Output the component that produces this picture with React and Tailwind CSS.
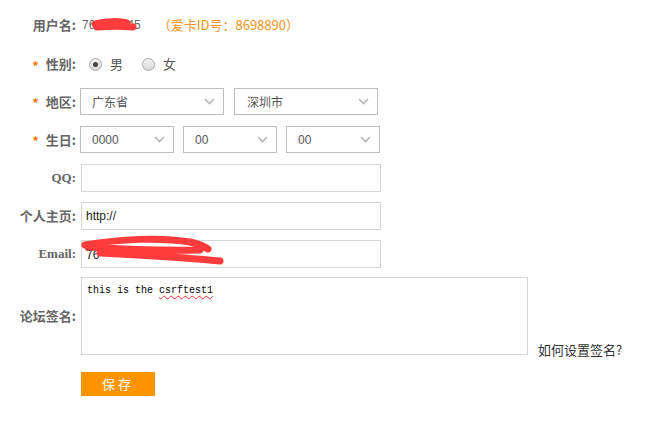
import React from 'react';

const cjk = { fontFamily: '"Noto Sans CJK SC", "Liberation Sans", sans-serif' };
const serif = { fontFamily: '"Liberation Serif", "Noto Sans CJK SC", serif' };

const Chevron = () => (
  <svg width="11" height="7" viewBox="0 0 11 7" className="shrink-0">
    <path d="M1 1l4.5 4.5L10 1" fill="none" stroke="#b5b5b5" strokeWidth="1.6" />
  </svg>
);

const Select = ({ value, w, pl = 'pl-[11px]' }) => (
  <div className={`flex items-center justify-between h-[27px] border border-[#bdbdbd] bg-white pr-[8px] ${pl} ${w}`}>
    <span className="text-[12px] text-[#555]">{value}</span>
    <Chevron />
  </div>
);

const Label = ({ star, children, font = cjk }) => (
  <div className="w-[77px] shrink-0 flex justify-end items-center pr-[1px]">
    {star && <span className="text-[#f27b00] font-bold text-[13px] mr-[7px] mt-[3px]">*</span>}
    <span className="text-[13px] font-bold text-[#666]" style={font}>{children}</span>
  </div>
);

const Radio = ({ checked }) => (
  <span className="w-[13px] h-[13px] rounded-full border border-[#a9a9a9] bg-gradient-to-b from-[#f2f2f2] to-[#d9d9d9] flex items-center justify-center">
    {checked && <span className="w-[5px] h-[5px] rounded-full bg-[#444]" />}
  </span>
);

const Scribble = ({ d, w, h, className }) => (
  <svg width={w} height={h} viewBox={`0 0 ${w} ${h}`} className={`absolute pointer-events-none ${className}`}>
    <path d={d} fill="none" stroke="#ff3b3b" strokeWidth="7" strokeLinecap="round" strokeLinejoin="round" />
  </svg>
);

export default function App() {
  return (
    <div className="w-[654px] h-[424px] bg-white relative text-[#555]" style={cjk}>
      <div className="pt-[15px]">
        {/* username */}
        <div className="flex items-center h-[20px]">
          <Label>用户名:</Label>
          <div className="relative ml-[5px] flex items-center">
            <span className="text-[12px] text-[#666]" style={{ fontFamily: '"Liberation Sans", sans-serif' }}>76</span>
            <span className="w-[32px]" />
            <span className="text-[12px] text-[#666]" style={{ fontFamily: '"Liberation Sans", sans-serif' }}>45</span>
            <Scribble w={46} h={14} className="left-[9px] top-[2px]" d="M4 6 C14 3, 30 3, 36 5 M6 9 C18 8, 32 8, 42 9" />
          </div>
          <span className="ml-[17px] text-[13px] text-[#f7941d]">（爱卡ID号：8698890）</span>
        </div>

        {/* gender */}
        <div className="flex items-center h-[20px] mt-[19px]">
          <Label star>性别:</Label>
          <div className="flex items-center ml-[12px] text-[13px] text-[#555]">
            <Radio checked />
            <span className="ml-[8px]">男</span>
            <span className="ml-[19px]"><Radio /></span>
            <span className="ml-[8px]">女</span>
          </div>
        </div>

        {/* region */}
        <div className="flex items-center mt-[14px]">
          <Label star>地区:</Label>
          <div className="flex gap-[10px] ml-[3px]">
            <Select value="广东省" w="w-[144px]" />
            <Select value="深圳市" w="w-[144px]" pl="pl-[12px]" />
          </div>
        </div>

        {/* birthday */}
        <div className="flex items-center mt-[11px]">
          <Label star>生日:</Label>
          <div className="flex gap-[9px] ml-[3px]" style={{ fontFamily: '"Liberation Sans", sans-serif' }}>
            <Select value="0000" w="w-[94px]" />
            <Select value="00" w="w-[94px]" />
            <Select value="00" w="w-[94px]" />
          </div>
        </div>

        {/* QQ */}
        <div className="flex items-center mt-[11px]">
          <Label font={serif}>QQ:</Label>
          <div className="ml-[4px] w-[300px] h-[28px] border border-[#d6d6d6]" />
        </div>

        {/* homepage */}
        <div className="flex items-center mt-[10px]">
          <Label>个人主页:</Label>
          <div className="ml-[4px] w-[300px] h-[28px] border border-[#d6d6d6] flex items-center pl-[4px] text-[12px] text-[#222]" style={{ fontFamily: '"Liberation Sans", sans-serif' }}>
            http://
          </div>
        </div>

        {/* email */}
        <div className="flex items-center mt-[10px]">
          <Label font={serif}>Email:</Label>
          <div className="relative ml-[4px] w-[300px] h-[28px] border border-[#d6d6d6] flex items-center pl-[4px] text-[12px] text-[#222]">
            <span>76</span>
            <Scribble w={150} h={32} className="left-[-2px] top-[-6px]" d="M5 10 C40 4, 80 2, 110 7 C120 9, 125 12, 128 14 M8 12 C40 14, 80 16, 120 15 M20 18 C60 20, 100 22, 140 26" />
          </div>
        </div>

        {/* signature */}
        <div className="flex mt-[9px]">
          <Label>论坛签名:</Label>
          <div className="ml-[4px] w-[447px] h-[78px] border border-[#d6d6d6] px-[5px] pt-[5px] text-[10px] text-black" style={{ fontFamily: '"Liberation Mono", monospace' }}>
            this is the <span className="underline decoration-wavy decoration-[#e33] decoration-1 underline-offset-2">csrftest1</span>
          </div>
          <span className="self-end ml-[10px] mb-[-4px] text-[13px] text-[#333]">如何设置签名?</span>
        </div>

        {/* save */}
        <div className="flex mt-[17px]">
          <div className="w-[77px] shrink-0" />
          <button className="ml-[4px] w-[74px] h-[24px] bg-[#fe9400] text-white text-[13px] tracking-[3px]">保存</button>
        </div>
      </div>
    </div>
  );
}
